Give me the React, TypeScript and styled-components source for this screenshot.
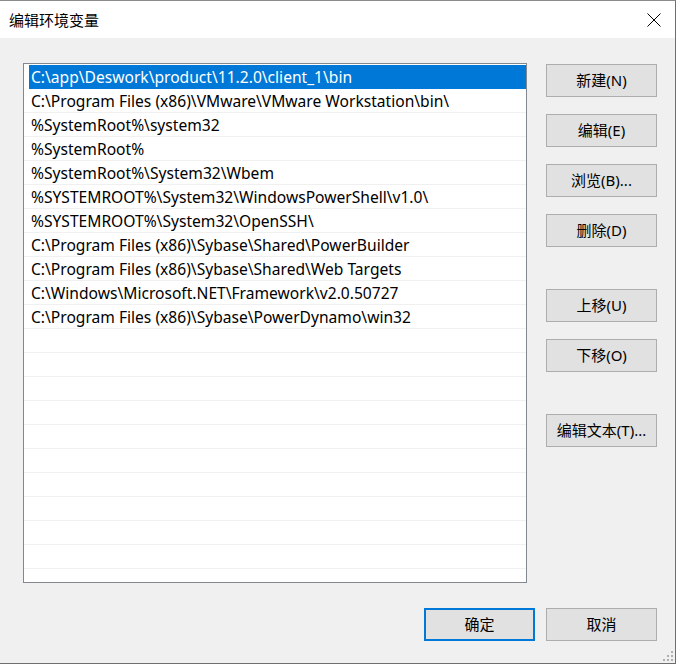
import React from "react";
import styled, { createGlobalStyle } from "styled-components";

const GlobalStyle = createGlobalStyle`
  html, body { margin: 0; padding: 0; background: #f0f0f0; }
  body { font-family: "Noto Sans", "Noto Sans CJK SC", sans-serif; }
  * { box-sizing: border-box; }
`;

const Window = styled.div`
  width: 676px;
  height: 664px;
  display: flex;
  flex-direction: column;
  border-top: 1px solid #8a8a8a;
  border-right: 1px solid #6e6e6e;
  border-bottom: 1px solid #6e6e6e;
  background: #f0f0f0;
  font-family: "Noto Sans", "Noto Sans CJK SC", sans-serif;
  font-size: 15px;
  color: #000;
`;

const TitleBar = styled.div`
  height: 37px;
  background: #fff;
  display: flex;
  align-items: center;
  justify-content: space-between;
  padding-left: 9px;
  flex-shrink: 0;
`;

const Title = styled.span`
  font-family: "Noto Sans CJK SC", sans-serif;
  font-size: 15px;
  color: #000;
  margin-top: -1px;
`;

const CloseButton = styled.div`
  width: 46px;
  height: 37px;
  display: flex;
  align-items: center;
  justify-content: center;
  padding-left: 4px;
  margin-top: 1px;
`;

const Body = styled.div`
  flex: 1;
  display: flex;
  flex-direction: column;
  padding: 25px 18px 0 23px;
`;

const Main = styled.div`
  display: flex;
  gap: 19px;
`;

const ListBox = styled.div`
  width: 504px;
  height: 520px;
  border: 1px solid #828790;
  background: #fff;
  padding-top: 1px;
  overflow: hidden;
`;

const Row = styled.div<{ $selected?: boolean }>`
  height: 24px;
  border-bottom: 1px solid ${(p) => (p.$selected ? "#0078d7" : "#f0f0f0")};
  background: ${(p) => (p.$selected ? "#0078d7" : "#fff")};
  color: ${(p) => (p.$selected ? "#fff" : "#000")};
  margin-left: ${(p) => (p.$selected ? "5px" : "0")};
  padding-left: ${(p) => (p.$selected ? "2px" : "7px")};
  padding-top: 1px;
  display: flex;
  align-items: center;
  font-size: 15.6px;
  line-height: 23px;
  white-space: nowrap;
`;

const ButtonColumn = styled.div`
  display: flex;
  flex-direction: column;
  width: 111px;
  padding-top: 1px;
`;

const Button = styled.button<{ $gap?: number; $default?: boolean }>`
  width: 111px;
  height: 33px;
  margin-top: ${(p) => p.$gap ?? 0}px;
  background: #e1e1e1;
  border: ${(p) => (p.$default ? "2px solid #0078d7" : "1px solid #adadad")};
  border-radius: 0;
  font-family: "Noto Sans", "Noto Sans CJK SC", sans-serif;
  font-size: 15px;
  color: #000;
  padding: 0 0 3px 0;
  display: flex;
  align-items: center;
  justify-content: center;
  cursor: default;
`;

const Footer = styled.div`
  display: flex;
  justify-content: flex-end;
  gap: 11px;
  margin-top: 25px;
  position: relative;
`;

const Grip = styled.svg`
  position: absolute;
  right: -16px;
  bottom: -20px;
`;

const items = [
  "C:\\app\\Deswork\\product\\11.2.0\\client_1\\bin",
  "C:\\Program Files (x86)\\VMware\\VMware Workstation\\bin\\",
  "%SystemRoot%\\system32",
  "%SystemRoot%",
  "%SystemRoot%\\System32\\Wbem",
  "%SYSTEMROOT%\\System32\\WindowsPowerShell\\v1.0\\",
  "%SYSTEMROOT%\\System32\\OpenSSH\\",
  "C:\\Program Files (x86)\\Sybase\\Shared\\PowerBuilder",
  "C:\\Program Files (x86)\\Sybase\\Shared\\Web Targets",
  "C:\\Windows\\Microsoft.NET\\Framework\\v2.0.50727",
  "C:\\Program Files (x86)\\Sybase\\PowerDynamo\\win32",
];

const rows = [...items, ...Array(11).fill("")];

const sideButtons: { label: string; gap: number }[] = [
  { label: "新建(N)", gap: 0 },
  { label: "编辑(E)", gap: 17 },
  { label: "浏览(B)...", gap: 17 },
  { label: "删除(D)", gap: 17 },
  { label: "上移(U)", gap: 42 },
  { label: "下移(O)", gap: 17 },
  { label: "编辑文本(T)...", gap: 42 },
];

export default function App() {
  return (
    <>
      <GlobalStyle />
      <Window>
        <TitleBar>
          <Title>编辑环境变量</Title>
          <CloseButton>
            <svg width="14" height="14" viewBox="0 0 14 14">
              <path d="M0.5 0.5 L13.5 13.5 M13.5 0.5 L0.5 13.5" stroke="#000" strokeWidth="1" />
            </svg>
          </CloseButton>
        </TitleBar>
        <Body>
          <Main>
            <ListBox>
              {rows.map((r, i) => (
                <Row key={i} $selected={i === 0}>
                  {r}
                </Row>
              ))}
            </ListBox>
            <ButtonColumn>
              {sideButtons.map((b) => (
                <Button key={b.label} $gap={b.gap}>
                  {b.label}
                </Button>
              ))}
            </ButtonColumn>
          </Main>
          <Footer>
            <Button $default>确定</Button>
            <Button>取消</Button>
            <Grip width="10" height="10" viewBox="0 0 10 10">
              <g fill="#b0b0b0">
                <rect x="8" y="0" width="2" height="2" />
                <rect x="4" y="4" width="2" height="2" />
                <rect x="8" y="4" width="2" height="2" />
                <rect x="0" y="8" width="2" height="2" />
                <rect x="4" y="8" width="2" height="2" />
                <rect x="8" y="8" width="2" height="2" />
              </g>
            </Grip>
          </Footer>
        </Body>
      </Window>
    </>
  );
}
